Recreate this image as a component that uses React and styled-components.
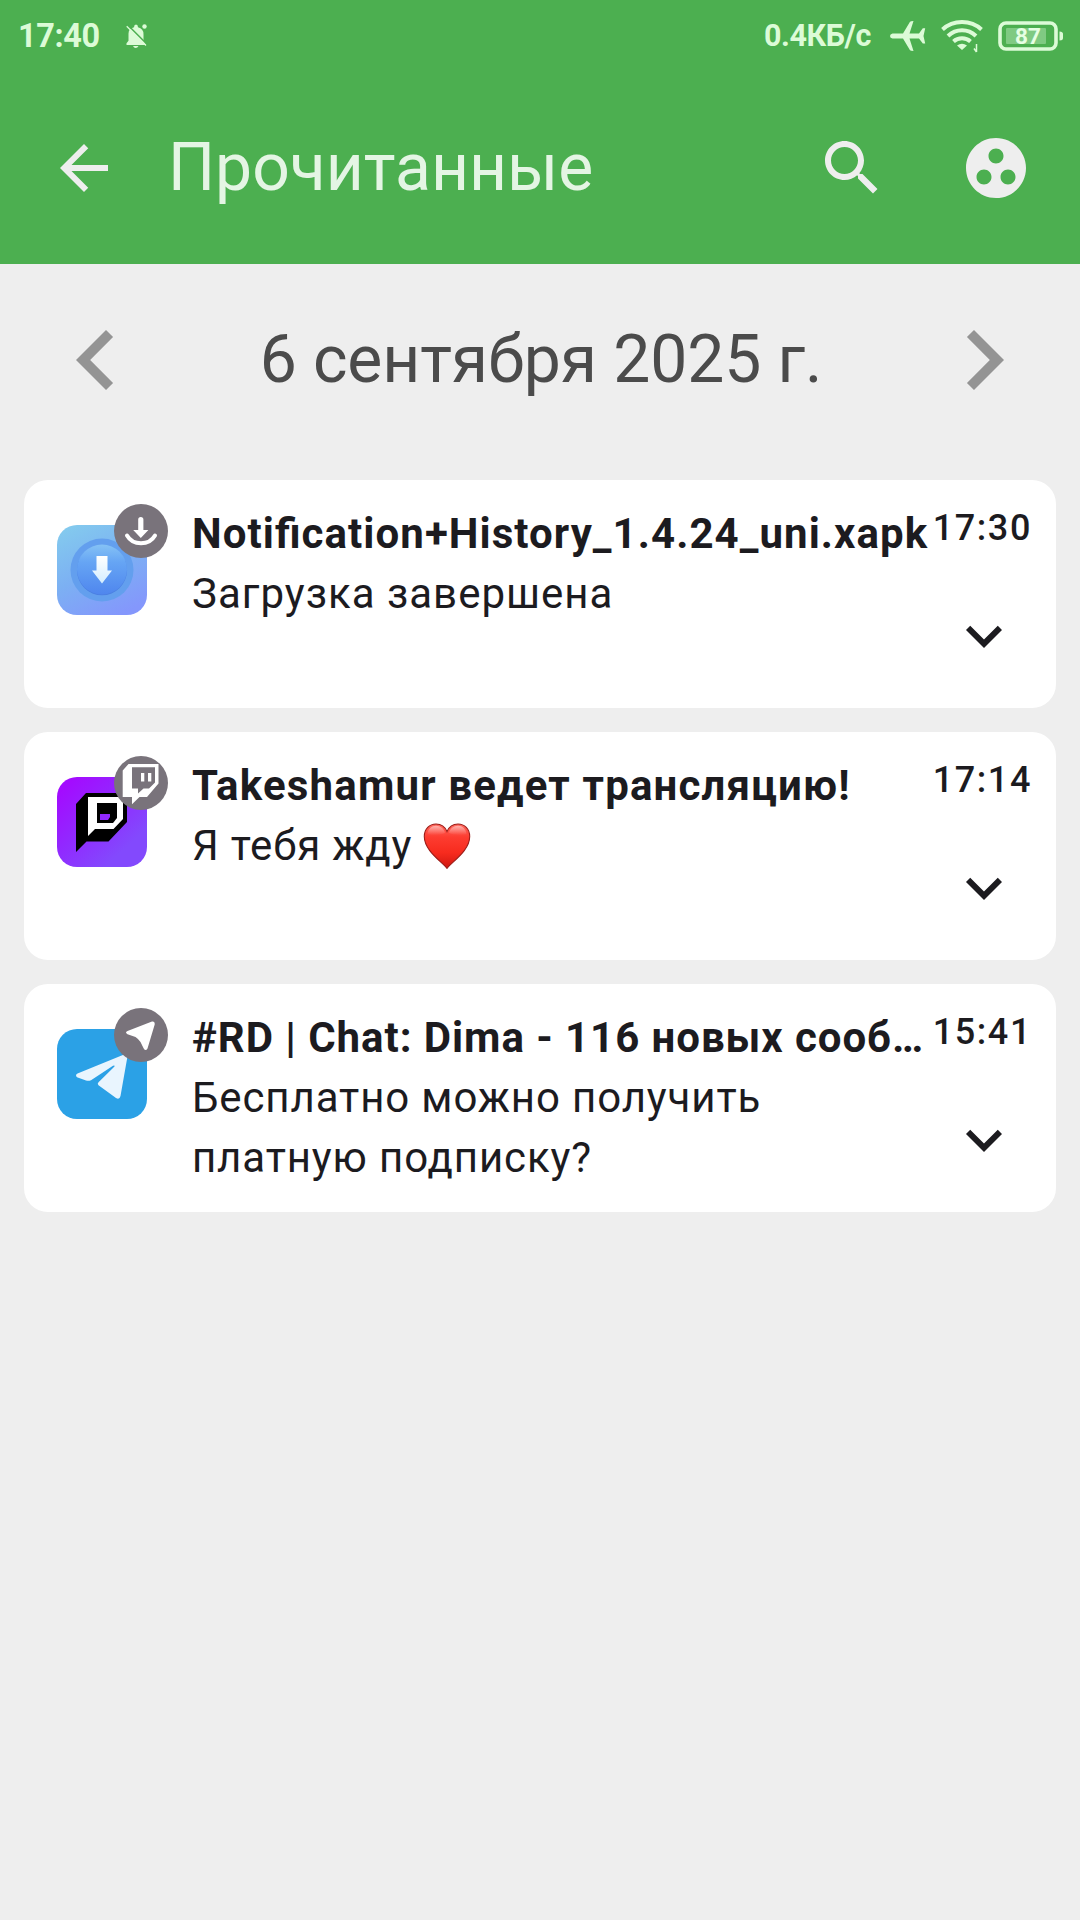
import React from 'react';
import styled, { createGlobalStyle } from 'styled-components';

const GlobalStyle = createGlobalStyle`
  * { box-sizing: border-box; }
  body { margin: 0; background: #eeeeee; }
`;

const Screen = styled.div`
  width: 1080px;
  min-height: 1920px;
  display: flex;
  flex-direction: column;
  background: #eeeeee;
  font-family: Roboto, 'Noto Sans', sans-serif;
  color: #1c1b1f;
`;

const Header = styled.header`
  height: 264px;
  background: #4caf50;
  display: flex;
  flex-direction: column;
`;

const StatusBar = styled.div`
  height: 72px;
  padding: 0 16px 0 18px;
  display: flex;
  align-items: center;
  justify-content: space-between;
  color: #dcfbd7;
`;

const StatusGroup = styled.div`
  display: flex;
  align-items: center;
`;

const StatusText = styled.span`
  font-size: ${(p) => p.$size}px;
  line-height: 40px;
  font-weight: 700;
  letter-spacing: ${(p) => p.$tracking}px;
  margin-right: ${(p) => p.$gap}px;
  white-space: nowrap;
`;

const Glyph = styled.svg`
  display: block;
  flex: none;
  width: ${(p) => p.$w}px;
  height: ${(p) => p.$h || p.$w}px;
  margin-right: ${(p) => p.$gap || 0}px;
  fill: currentColor;
`;

const Toolbar = styled.div`
  height: 192px;
  padding: 0 48px 0 48px;
  display: flex;
  align-items: center;
  color: #eeeeee;
`;

const ToolbarTitle = styled.h1`
  flex: 1;
  margin: 0 0 0 48px;
  font-size: 66px;
  line-height: 84px;
  font-weight: 400;
  color: #e4f5e4;
  white-space: nowrap;
`;

const IconButton = styled.button`
  flex: none;
  width: ${(p) => p.$size}px;
  height: ${(p) => p.$size}px;
  margin-left: ${(p) => p.$before || 0}px;
  margin-right: ${(p) => p.$after || 0}px;
  padding: 0;
  border: 0;
  background: none;
  color: inherit;
`;

const DateBar = styled.div`
  height: 216px;
  padding: 36px 36px 60px;
  display: flex;
  align-items: center;
  justify-content: space-between;
  color: #949494;
`;

const DateLabel = styled.h2`
  margin: 0 0 0 2px;
  font-size: 66px;
  line-height: 84px;
  font-weight: 400;
  letter-spacing: -0.1px;
  color: #4b4b4b;
  white-space: nowrap;
`;

const CardList = styled.main`
  padding: 0 24px;
  display: flex;
  flex-direction: column;
  gap: 24px;
`;

const Card = styled.article`
  height: 228px;
  padding: 24px 24px 24px 33px;
  border-radius: 24px;
  background: #ffffff;
  display: flex;
`;

const AppIcon = styled.div`
  position: relative;
  flex: none;
  width: 90px;
  height: 90px;
  margin: 21px 45px 0 0;
`;

const Badge = styled.div`
  position: absolute;
  right: -21px;
  top: -21px;
  width: 54px;
  height: 54px;
  border-radius: 50%;
  background: #79737b;
  color: #ffffff;
`;

const CardText = styled.div`
  flex: 1;
  min-width: 0;
  font-size: 42px;
  line-height: 60px;
`;

const CardTitle = styled.h3`
  margin: 0;
  font-size: inherit;
  font-weight: 700;
  font-feature-settings: 'liga' 1;
  letter-spacing: ${(p) => p.$tracking}px;
  white-space: nowrap;
`;

const CardBody = styled.p`
  margin: 0;
  max-width: 640px;
  letter-spacing: ${(p) => p.$tracking}px;
`;

const HeartIcon = styled.svg`
  display: inline-block;
  width: 48px;
  height: 48px;
  vertical-align: -10px;
`;

const CardSide = styled.div`
  flex: none;
  width: 99px;
  display: flex;
  flex-direction: column;
  align-items: flex-end;
`;

const Time = styled.time`
  font-size: 36px;
  line-height: 48px;
  font-weight: 500;
  letter-spacing: 1.6px;
  white-space: nowrap;
  margin-bottom: 48px;
`;

const DownloaderArt = () => (
  <Glyph $w={90} viewBox="0 0 90 90">
    <defs>
      <linearGradient id="dlBg" x1="0.2" y1="0" x2="0.7" y2="1">
        <stop offset="0" stopColor="#83c9ee" />
        <stop offset="0.5" stopColor="#7cb0f3" />
        <stop offset="1" stopColor="#8497fc" />
      </linearGradient>
      <linearGradient id="dlDisc" x1="0" y1="0" x2="0" y2="1">
        <stop offset="0" stopColor="#85c2f5" />
        <stop offset="0.35" stopColor="#66a5f4" />
        <stop offset="1" stopColor="#4f86ee" />
      </linearGradient>
      <linearGradient id="dlArrow" x1="0" y1="0" x2="0" y2="1">
        <stop offset="0" stopColor="#ffffff" />
        <stop offset="1" stopColor="#d3edff" />
      </linearGradient>
    </defs>
    <rect width="90" height="90" rx="20" fill="url(#dlBg)" />
    <circle cx="45" cy="45" r="31.5" fill="#639fee" />
    <circle cx="45" cy="45.300" r="25" fill="#4b80e2" />
    <circle cx="45" cy="44.500" r="25" fill="url(#dlDisc)" />
    <path d="M39.500 31h11v14.500h4.500L45 58.500 35 45.500h4.500z" fill="url(#dlArrow)" />
  </Glyph>
);

const StreamArt = () => (
  <Glyph $w={90} viewBox="0 0 90 90">
    <defs>
      <linearGradient id="stBg" x1="0.1" y1="0.1" x2="0.75" y2="0.8">
        <stop offset="0" stopColor="#a30cff" />
        <stop offset="0.5" stopColor="#9129ff" />
        <stop offset="1" stopColor="#8349fd" />
      </linearGradient>
    </defs>
    <rect width="90" height="90" rx="20" fill="url(#stBg)" />
    <path d="M29 16h41v29L51.500 64.500H29.500L19 75V27z" fill="#000000" />
    <path d="M31 20h35v22L56.500 52H38l-7 7z" fill="#ffffff" />
    <path d="M40 26h20v15l-4 5H40z" fill="#000000" />
    <path d="M43 37h10v3l-2 3h-8z" fill="#9128ff" />
  </Glyph>
);

const MessengerArt = () => (
  <Glyph $w={90} viewBox="0 0 90 90">
    <rect width="90" height="90" rx="20" fill="#2ba1e6" />
    <path
      d="M20.500 44.500 66.500 25.800Q70.800 24.500 70.200 29L63.500 67Q62.500 71 59 69L41.500 56.200Q40 54.800 41.500 53.200L57.500 37.500Q58 36 56 36.800L34 51.200Q31.500 52.300 29 51.500L20 48.200Q17.800 46 20.500 44.500z"
      fill="#e9f5fe"
    />
  </Glyph>
);

const DownloadBadge = () => (
  <Glyph $w={54} viewBox="0 0 54 54">
    <path d="M24.200 15.500q0-2.500 2.600-2.500t2.600 2.500V26h5L26.800 34 19.200 26h5z" />
    <path d="M13 31.500q4.500 7.800 14 7.800t14-7.800" fill="none" stroke="#ffffff" strokeWidth="4" strokeLinecap="round" />
  </Glyph>
);

const TwitchBadge = () => (
  <Glyph $w={54} viewBox="0 0 54 54">
    <path
      fillRule="evenodd"
      d="M14.500 8H44.500V27.500L33 41H25.500L18 48.200V41H8.700V14.500zM18 11.200V32.500H24V37.500L29.500 32.500H35L41 26.500V11.200zM27 17h3.300v8.500H27zM34 17h3.300v8.500H34z"
    />
  </Glyph>
);

const PlaneBadge = () => (
  <Glyph $w={54} viewBox="0 0 54 54">
    <path d="M13.500 23 38 13.600Q41 13.200 40.700 16.500L33.500 40.500Q31.600 43.500 29.700 40.500L26.500 34Q24.500 31 21.500 29L13.500 26.200Q10.500 24.500 13.500 23z" />
  </Glyph>
);

const Heart = () => (
  <HeartIcon viewBox="0 0 48 48">
    <defs>
      <linearGradient id="heartFill" x1="0" y1="0" x2="0" y2="1">
        <stop offset="0" stopColor="#ff6a60" />
        <stop offset="0.3" stopColor="#fd3c30" />
        <stop offset="0.65" stopColor="#f72b1e" />
        <stop offset="1" stopColor="#cf1710" />
      </linearGradient>
      <linearGradient id="heartShine" x1="0" y1="0" x2="0" y2="1">
        <stop offset="0" stopColor="#ffffff" stopOpacity="0.5" />
        <stop offset="1" stopColor="#ffffff" stopOpacity="0" />
      </linearGradient>
    </defs>
    <path
      d="M24 46.300C18 39 1.300 28.500 1.300 14.500 1.300 7 6.500 2 13 2c5.500 0 9.300 3.500 11 7.500C25.700 5.500 29.500 2 35 2c6.500 0 11.700 5 11.700 12.500C46.700 28.500 30 39 24 46.300z"
      fill="url(#heartFill)"
      stroke="#9c1d18"
      strokeWidth="1.100"
    />
    <path d="M4.500 12C5 7 8.500 3.800 13 3.800s8 3.200 9 7C19 13 8 14 4.500 12zM43.500 12C43 7 39.500 3.800 35 3.800s-8 3.200-9 7C29 13 40 14 43.500 12z" fill="url(#heartShine)" />
  </HeartIcon>
);

const notifications = [
  {
    title: 'Notification+History_1.4.24_uni.xapk',
    titleTracking: 1.06,
    body: 'Загрузка завершена',
    bodyTracking: 1,
    time: '17:30',
    Art: DownloaderArt,
    Mark: DownloadBadge,
  },
  {
    title: 'Takeshamur ведет трансляцию!',
    titleTracking: 1.17,
    body: <>Я тебя жду <Heart /></>,
    bodyTracking: 0.8,
    time: '17:14',
    Art: StreamArt,
    Mark: TwitchBadge,
  },
  {
    title: '#RD | Chat: Dima - 116 новых сооб…',
    titleTracking: 0.94,
    body: 'Бесплатно можно получить платную подписку?',
    bodyTracking: 0.88,
    time: '15:41',
    Art: MessengerArt,
    Mark: PlaneBadge,
  },
];

const NotificationCard = ({ title, titleTracking, body, bodyTracking, time, Art, Mark }) => (
  <Card>
    <AppIcon>
      <Art />
      <Badge><Mark /></Badge>
    </AppIcon>
    <CardText>
      <CardTitle $tracking={titleTracking}>{title}</CardTitle>
      <CardBody $tracking={bodyTracking}>{body}</CardBody>
    </CardText>
    <CardSide>
      <Time>{time}</Time>
      <IconButton $size={72} $after={12} aria-label="Развернуть">
        <Glyph $w={72} viewBox="0 0 24 24">
          <path d="M16.590 8.590 12 13.170 7.410 8.590 6 10l6 6 6-6z" />
        </Glyph>
      </IconButton>
    </CardSide>
  </Card>
);

export default function App() {
  return (
    <>
      <GlobalStyle />
      <Screen>
        <Header>
          <StatusBar>
            <StatusGroup>
              <StatusText $size={32.5} $tracking={-0.4} $gap={26}>17:40</StatusText>
              <Glyph $w={22} $h={24} viewBox="0 0 22 24">
                <path d="M8 3.200Q8 .5 10 .5t2 2.700q5.500 1.300 5.500 7v6l2.500 4.800H.5v-1.800l2-2.400V9.500Q2.500 4.500 8 3.200zM7 22h5.500Q11.500 24 9.700 24T7 22z" />
                <path d="M1.500.8 21 20.300" fill="none" stroke="#4caf50" strokeWidth="1.600" />
                <path d="M.7 2.200 20 21.500" fill="none" stroke="currentColor" strokeWidth="1.300" />
                <circle cx="18.500" cy="2.500" r="2.200" />
              </Glyph>
            </StatusGroup>
            <StatusGroup>
              <StatusText $size={30.5} $tracking={-0.4} $gap={19}>0.4КБ/с</StatusText>
              <Glyph $w={36} $h={30} $gap={15} viewBox="0 0 36 30">
                <path d="M2.500 12.500H13L20 .800Q20.700 0 23.500 0L19.500 12.500H29L32.800 7.200h2.400L33.500 15l1.700 7.500h-2.400L29 17.500h-9.500L23.500 30Q20.700 30 20 29.200L13 17.500H2.500Q0 17 0 15t2.500-2.500z" />
              </Glyph>
              <Glyph $w={42} $h={34} $gap={15} viewBox="0 0 42 34">
                <g fill="none" stroke="currentColor" strokeWidth="4">
                  <path d="M1.500 10.500Q9.500 3 21 3t19.500 7.500" />
                  <path d="M7 17Q13 11.300 21 11.300T35 17" />
                  <path d="M12.500 22.500Q16 19.300 21 19.300t8.500 3.200" />
                </g>
                <path d="M16 26.500q5-3.500 10 0L21 31z" />
                <path d="M35.500 25v8M33 29.500l2.500 3.500" fill="none" stroke="currentColor" strokeWidth="1.500" />
              </Glyph>
              <Glyph $w={66} $h={30} viewBox="0 0 66 30">
                <rect x="2" y="2" width="56" height="26" rx="6" fill="none" stroke="currentColor" strokeWidth="3.600" />
                <rect x="8" y="7" width="40" height="16" rx="1" fill="#7fca82" />
                <path d="M61.500 10.500q3.500 0 3.500 2.500v4q0 2.500-3.500 2.500z" />
                <text x="30" y="22.800" textAnchor="middle" fontSize="22.500" fontWeight="700" fill="#e6ffe3">87</text>
              </Glyph>
            </StatusGroup>
          </StatusBar>
          <Toolbar>
            <IconButton $size={72} aria-label="Назад">
              <Glyph $w={72} viewBox="0 0 24 24">
                <path d="M20 11H7.830l5.590-5.590L12 4l-8 8 8 8 1.410-1.410L7.830 13H20v-2z" />
              </Glyph>
            </IconButton>
            <ToolbarTitle>Прочитанные</ToolbarTitle>
            <IconButton $size={72} aria-label="Поиск">
              <Glyph $w={72} viewBox="0 0 24 24">
                <path d="M15.500 14h-.790l-.280-.270C15.410 12.590 16 11.110 16 9.500 16 5.910 13.090 3 9.500 3S3 5.910 3 9.500 5.910 16 9.500 16c1.610 0 3.090-.590 4.230-1.570l.270.280v.790l5 4.990L20.490 19l-4.990-5zm-6 0C7.010 14 5 11.990 5 9.500S7.010 5 9.500 5 14 7.010 14 9.500 11.990 14 9.500 14z" />
              </Glyph>
            </IconButton>
            <IconButton $size={72} $before={72} aria-label="Группировка">
              <Glyph $w={72} viewBox="0 0 24 24">
                <path d="M12 2C6.480 2 2 6.480 2 12s4.480 10 10 10 10-4.480 10-10S17.520 2 12 2zM8 17.500c-1.380 0-2.500-1.120-2.500-2.500s1.120-2.500 2.500-2.500 2.500 1.120 2.500 2.500-1.120 2.500-2.500 2.500zM9.500 8c0-1.380 1.120-2.500 2.500-2.500s2.500 1.120 2.500 2.500-1.120 2.500-2.500 2.500S9.500 9.380 9.500 8zm6.500 9.500c-1.380 0-2.500-1.120-2.500-2.500s1.120-2.500 2.500-2.500 2.500 1.120 2.500 2.500-1.120 2.500-2.500 2.500z" />
              </Glyph>
            </IconButton>
          </Toolbar>
        </Header>
        <DateBar>
          <IconButton $size={120} aria-label="Предыдущий день">
            <Glyph $w={120} viewBox="0 0 24 24">
              <path d="M15.410 7.410 14 6l-6 6 6 6 1.410-1.410L10.830 12z" />
            </Glyph>
          </IconButton>
          <DateLabel>6 сентября 2025 г.</DateLabel>
          <IconButton $size={120} aria-label="Следующий день">
            <Glyph $w={120} viewBox="0 0 24 24">
              <path d="M10 6 8.590 7.410 13.170 12l-4.580 4.590L10 18l6-6z" />
            </Glyph>
          </IconButton>
        </DateBar>
        <CardList>
          {notifications.map((item) => (
            <NotificationCard key={item.time} {...item} />
          ))}
        </CardList>
      </Screen>
    </>
  );
}
